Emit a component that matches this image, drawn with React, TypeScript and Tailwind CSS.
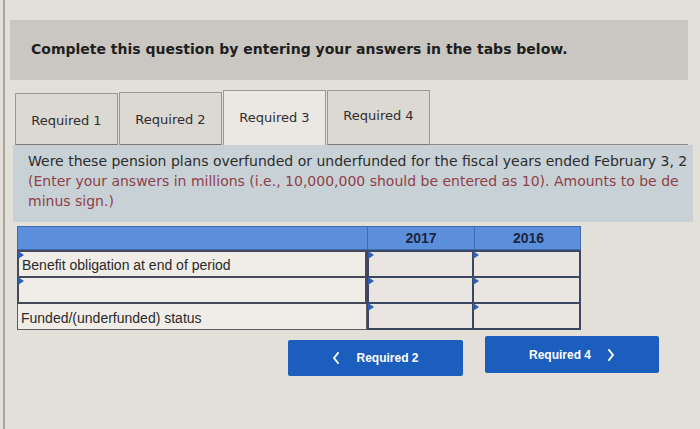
import React from "react";

const Marker = () => (
  <svg className="absolute left-[-1px] top-[-1px]" width="6" height="8" viewBox="0 0 6 8">
    <path d="M0 0 L6 4 L0 8 Z" fill="#2f5fb3" />
  </svg>
);

export default function App() {
  const tabs = [
    { label: "Required 1", cls: "h-[52px] pt-[4px]", active: false },
    { label: "Required 2", cls: "h-[53px] pt-[3px]", active: false },
    { label: "Required 3", cls: "h-[55px] pt-[0px]", active: true },
    { label: "Required 4", cls: "h-[55px] pb-[3px]", active: false },
  ];
  return (
    <div className="w-[700px] h-[429px] overflow-hidden bg-[#e3dfd9] pl-[3px] font-['DejaVu_Sans',sans-serif]">
      <div className="h-full border-l-2 border-[#aaa6a0] flex flex-col">
        {/* banner */}
        <div className="mt-[20px] ml-[5px] w-[678px] h-[60px] bg-[#cac6c1] flex items-center pl-[21px] pb-[2px]">
          <span className="text-[14px] font-bold text-[#1e1e1e]">
            Complete this question by entering your answers in the tabs below.
          </span>
        </div>

        {/* tabs */}
        <div className="mt-[10px] ml-[10px] flex items-end h-[55px] w-[673px]">
          {tabs.map((t, i) => (
            <div
              key={t.label}
              className={`${t.cls} w-[103px] ${i > 0 ? "ml-[1px]" : ""} flex items-center justify-center border border-[#9b9893] ${
                t.active ? "bg-[#ebe8e3] border-b-0" : "bg-[#dcd8d2] border-b-[#7d7a76]"
              }`}
            >
              <span className="text-[13px] text-[#2e2e2e]">{t.label}</span>
            </div>
          ))}
          <div className="flex-1 h-[3px] border-b border-[#8e8b87]" />
        </div>

        {/* question panel */}
        <div className="ml-[8px] w-[680px] h-[77px] bg-[#c8d1d6] pt-[6px] pl-[15px] overflow-hidden whitespace-nowrap text-[14px] leading-[20px]">
          <div className="text-[#2c2c2c]">
            Were these pension plans overfunded or underfunded for the fiscal years ended February 3, 2
          </div>
          <div className="text-[#8f3f48]">
            (Enter your answers in millions (i.e., 10,000,000 should be entered as 10). Amounts to be de
          </div>
          <div className="text-[#8f3f48]">minus sign.)</div>
        </div>

        {/* table */}
        <div className="mt-[4px] ml-[12px] w-[564px] font-['Liberation_Sans',Arial,sans-serif]">
          <div className="grid grid-cols-[350px_107px_107px] h-[24px] bg-[#5b8fdb] border border-[#3f6cb0]">
            <div className="border-r border-[#3f6cb0]" />
            <div className="border-r border-[#3f6cb0] flex items-center justify-center text-[14px] font-bold text-[#1c2640]">
              2017
            </div>
            <div className="flex items-center justify-center text-[14px] font-bold text-[#1c2640]">2016</div>
          </div>
          {[
            { label: "Benefit obligation at end of period", h: "h-[28px]", pb: "pb-[3px]", marker: true },
            { label: "", h: "h-[26px]", pb: "", marker: true },
            { label: "Funded/(underfunded) status", h: "h-[26px]", pb: "pb-[3px]", marker: false },
          ].map((r, i) => (
            <div key={i} className={`grid grid-cols-[350px_107px_107px] ${r.h}`}>
              <div
                className={`relative bg-[#f0ede8] ${
                  i === 2 ? "border border-t-0 border-[#5e5e62]" : "border-2 border-[#464a58]"
                } ${i === 1 ? "border-t-0" : ""} flex items-end pl-[3px] ${r.pb}`}
              >
                {r.marker && <Marker />}
                <span className="text-[14px] text-[#2a2a2a] leading-[16px]">{r.label}</span>
              </div>
              <div className={`relative h-full bg-[#e9e6e1] border-2 border-[#3c4660] ${i > 0 ? "border-t-0" : ""}`}>
                <Marker />
              </div>
              <div className={`relative h-full bg-[#e9e6e1] border-2 border-l-0 border-[#3c4660] ${i > 0 ? "border-t-0" : ""}`}>
                <Marker />
              </div>
            </div>
          ))}
        </div>

        {/* buttons */}
        <div className="flex items-start pl-[283px] gap-[22px] font-['Liberation_Sans',Arial,sans-serif]">
          <button className="mt-[10px] w-[175px] h-[36px] bg-[#1c5ebd] rounded-[2px] flex items-center justify-center gap-[16px] text-white text-[12px] font-bold">
            <svg width="8" height="12" viewBox="0 0 8 12">
              <path d="M6 1 L2 6 L6 11" stroke="white" strokeWidth="2" fill="none" strokeLinecap="round" strokeLinejoin="round" />
            </svg>
            <span>Required 2</span>
          </button>
          <button className="mt-[6px] w-[174px] h-[37px] bg-[#1c5ebd] rounded-[2px] flex items-center justify-center gap-[16px] text-white text-[12px] font-bold">
            <span>Required 4</span>
            <svg width="8" height="12" viewBox="0 0 8 12">
              <path d="M2 1 L6 6 L2 11" stroke="white" strokeWidth="2" fill="none" strokeLinecap="round" strokeLinejoin="round" />
            </svg>
          </button>
        </div>
      </div>
    </div>
  );
}
